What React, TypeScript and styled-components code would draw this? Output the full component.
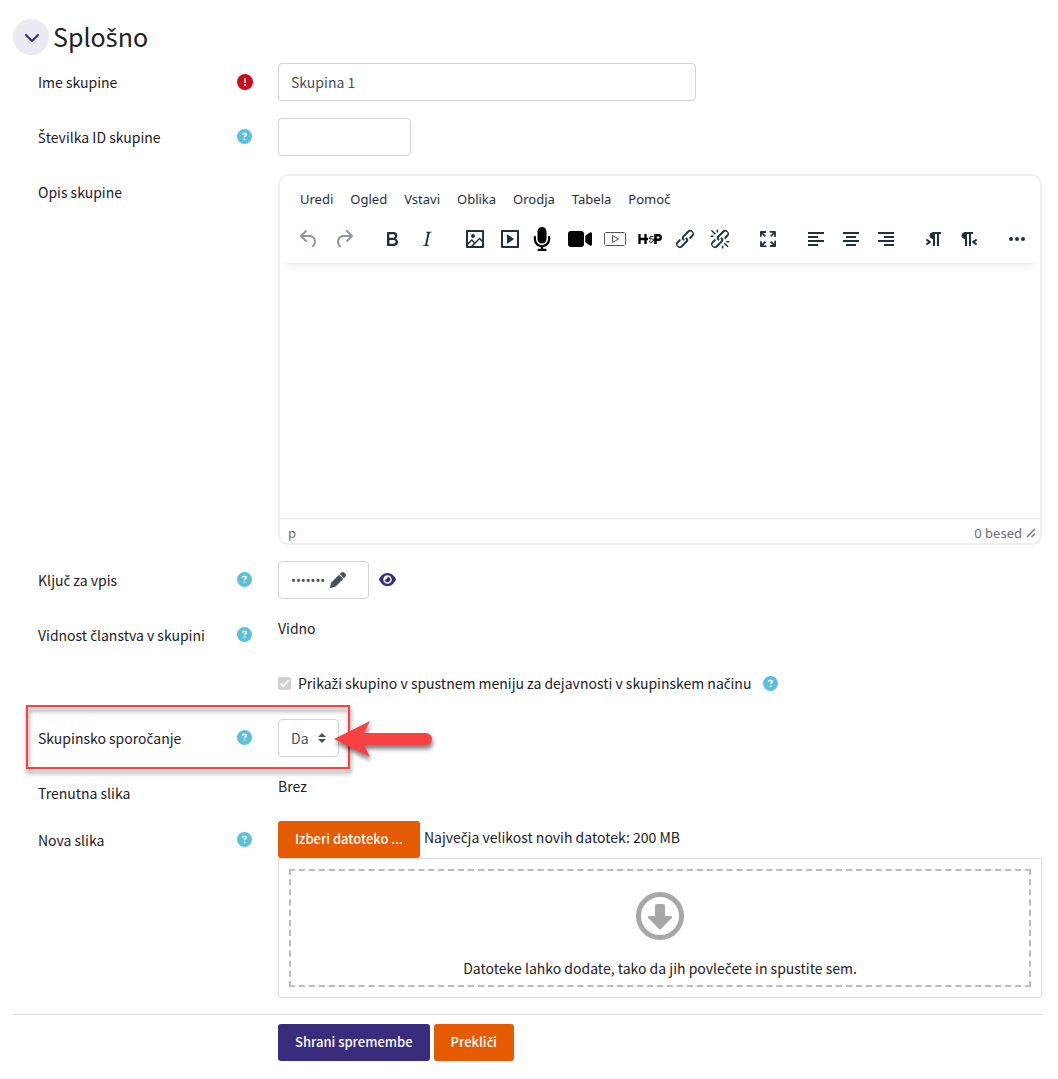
import React from 'react';
import styled, { createGlobalStyle } from 'styled-components';
import {
  FaChevronDown,
  FaCircleExclamation,
  FaCircleQuestion,
  FaEye,
  FaPen,
  FaVideo,
} from 'react-icons/fa6';

const GlobalStyle = createGlobalStyle`
  *, *::before, *::after { box-sizing: border-box; }
  body {
    margin: 0;
    background: #fff;
    color: #1d2125;
    font-family: "Noto Sans CJK SC", "Noto Sans", sans-serif;
    font-size: 14px;
    line-height: 24px;
  }
  button, input, select { font: inherit; color: inherit; margin: 0; }
`;

const Form = styled.form`
  padding: 19px 16px 16px 13px;
`;

const SectionHeader = styled.header`
  display: flex;
  align-items: center;
  gap: 4px;
  height: 36px;
  margin-bottom: 8px;
`;

const Toggle = styled.button`
  display: flex;
  align-items: center;
  justify-content: center;
  width: 36px;
  height: 36px;
  padding: 0 0 0 1px;
  border: 0;
  border-radius: 50%;
  background: #ebe9f2;
  color: #3a2c7d;
`;

const Title = styled.h3`
  margin: 0;
  padding-bottom: 2px;
  font-size: 25px;
  font-weight: 400;
  line-height: 34px;
`;

const CaronLetter = styled.span`
  font-family: "Noto Sans", sans-serif;
`;

const Row = styled.div<{ $height?: number }>`
  position: relative;
  display: grid;
  grid-template-columns: 215px minmax(0, 1fr);
  column-gap: 25px;
  align-items: start;
  min-height: ${p => p.$height ?? 39}px;
  margin: 0 0 16px 25px;
`;

const LabelCell = styled.div`
  display: flex;
  justify-content: space-between;
  align-items: flex-start;
  min-height: 31px;
`;

const LabelText = styled.label`
  padding-top: 7px;
`;

const HelpButton = styled.button<{ $tone?: string; $height?: number }>`
  display: flex;
  align-items: center;
  width: 16px;
  height: ${p => p.$height ?? 37}px;
  padding: 0;
  border: 0;
  background: none;
  color: ${p => p.$tone ?? '#5bc0de'};
`;

const Field = styled.div`
  min-width: 0;
`;

const TextInput = styled.input<{ $width: number }>`
  display: block;
  width: ${p => p.$width}px;
  max-width: 100%;
  height: 38px;
  padding: 6px 12px;
  border: 1px solid #ced4da;
  border-radius: 4px;
  background: #fff;
  color: #495057;
`;

const Editor = styled.div`
  display: flex;
  flex-direction: column;
  height: 371px;
  margin-top: 1px;
  border: 2px solid #eee;
  border-radius: 10px;
  overflow: hidden;
  font-family: "Noto Sans", sans-serif;
  font-size: 13px;
  color: #222f3e;
`;

const EditorHeader = styled.div`
  margin: 0 3px;
  padding-top: 8px;
  background: #fff;
  box-shadow: 0 2px 2px -2px rgba(34, 47, 62, 0.1), 0 8px 8px -4px rgba(34, 47, 62, 0.07);
`;

const MenuBar = styled.div`
  display: flex;
  gap: 1px;
  padding: 0 9px;
`;

const MenuButton = styled.button`
  height: 30px;
  padding: 0 8px;
  border: 0;
  background: none;
`;

const ToolBar = styled.div`
  display: flex;
  gap: 13px;
  padding: 8px 8px 7px;
`;

const ToolGroup = styled.div`
  display: flex;
`;

const ToolButton = styled.button`
  display: flex;
  align-items: center;
  justify-content: center;
  width: 35px;
  height: 34px;
  padding: 0;
  border: 0;
  background: none;
  &:disabled { color: rgba(34, 47, 62, 0.5); }
`;

const EditArea = styled.div`
  flex: 1;
  outline: none;
`;

const StatusBar = styled.div`
  display: flex;
  justify-content: space-between;
  height: 25px;
  padding: 0 4px 0 8px;
  border-top: 1px solid #e3e3e3;
  color: #646d78;
  line-height: 28px;
`;

const WordCount = styled.span`
  display: flex;
  align-items: center;
  gap: 4px;
  height: 28px;
`;

const Inline = styled.div`
  display: flex;
  align-items: center;
`;

const PasswordButton = styled.button`
  display: flex;
  align-items: center;
  gap: 5px;
  width: 91px;
  height: 38px;
  padding: 0 12px;
  border: 1px solid #ced4da;
  border-radius: 4px;
  background: #fff;
  color: #495057;
  font-family: "Noto Sans", sans-serif;
  font-size: 13px;
`;

const RevealButton = styled.button`
  display: flex;
  padding: 0 0 2px;
  margin-left: 10px;
  border: 0;
  background: none;
  color: #3a2c7d;
`;

const CheckBox = styled.input`
  appearance: none;
  display: flex;
  justify-content: center;
  width: 13px;
  height: 13px;
  margin-right: 7px;
  border-radius: 2px;
  background: #d0d0d0;
  &::after {
    content: '';
    width: 5px;
    height: 9px;
    margin-top: 1px;
    border: solid #f6f6f6;
    border-width: 0 2px 2px 0;
    transform: rotate(42deg);
  }
`;

const CheckLabel = styled.label`
  margin-right: 12px;
`;

const SelectBox = styled.div`
  position: relative;
  width: 61px;
  height: 38px;
`;

const Select = styled.select`
  appearance: none;
  width: 100%;
  height: 100%;
  padding: 0 24px 0 12px;
  border: 1px solid #ced4da;
  border-radius: 4px;
  background: #fff;
  color: #495057;
`;

const SelectCaret = styled.svg`
  position: absolute;
  top: 14px;
  right: 13px;
  pointer-events: none;
`;

const Highlight = styled.div`
  position: absolute;
  left: -12px;
  top: -14px;
  width: 324px;
  height: 64px;
  border: 2px solid #f94144;
  filter: drop-shadow(1px 4px 2px rgba(0, 0, 0, 0.5));
  pointer-events: none;
`;

const Pointer = styled.svg`
  position: absolute;
  left: 296px;
  top: 2px;
  filter: drop-shadow(1px 4px 2px rgba(0, 0, 0, 0.5));
  pointer-events: none;
`;

const Button = styled.button<{ $primary?: boolean }>`
  height: 37px;
  padding: 0 17px 2px;
  border: 0;
  border-radius: 3px;
  background: ${p => (p.$primary ? '#3a2c7d' : '#e75b00')};
  color: #fff;
  font-size: 13px;
  font-weight: 500;
  line-height: 35px;
`;

const FileHint = styled.span`
  margin-left: 4px;
  line-height: 32px;
`;

const FileRow = styled.div`
  display: flex;
  align-items: flex-start;
`;

const FileArea = styled.div`
  padding: 10px;
  border: 1px solid #dcdcdc;
  border-radius: 0 0 4px 4px;
`;

const DropZone = styled.div`
  display: flex;
  flex-direction: column;
  align-items: center;
  height: 118px;
  padding-top: 21px;
  border: 2px dashed #bbb;
  color: #a5a7a8;
`;

const DropText = styled.p`
  margin: 16px 0 0;
  color: #1d2125;
`;

const Footer = styled.footer`
  display: flex;
  gap: 4px;
  padding: 9px 0 0 265px;
  border-top: 1px solid #dcdcdc;
`;

/* Letters with a caron take the Latin face; the body face has no glyph for them. */
const Text = ({ children }: { children: string }) => (
  <span>
    {children.split(/([čšžČŠŽ])/).map((part, i) => (i % 2 ? <CaronLetter key={i}>{part}</CaronLetter> : part))}
  </span>
);

const Glyph = ({ d, size = 24 }: { d: string; size?: number }) => (
  <svg width={size} height={size} viewBox="0 0 24 24" fill="currentColor" fillRule="evenodd" aria-hidden="true">
    <path d={d} />
  </svg>
);

const CHAIN =
  'M6.2 12.3a1 1 0 0 1 1.4 1.4l-2 2a2 2 0 1 0 2.6 2.8l4.8-4.8a1 1 0 0 0 0-1.4 1 1 0 1 1 1.4-1.3 2.9 2.9 0 0 1 0 4L9.6 20a3.9 3.9 0 0 1-5.5-5.5l2-2Zm11.6-.6a1 1 0 0 1-1.4-1.4l2-2a2 2 0 1 0-2.6-2.8L11 10.3a1 1 0 0 0 0 1.4A1 1 0 1 1 9.6 13a2.9 2.9 0 0 1 0-4L14.4 4a3.9 3.9 0 0 1 5.5 5.5l-2 2Z';

const icons = {
  undo: 'M6.4 8H12c3.7 0 6.2 2 6.8 5.1.6 2.7-.4 5.6-2.3 6.8a1 1 0 0 1-1-1.8c1.1-.6 1.8-2.7 1.4-4.6-.5-2.1-2.1-3.5-4.9-3.5H6.4l3.3 3.3a1 1 0 1 1-1.4 1.4l-5-5a1 1 0 0 1 0-1.4l5-5a1 1 0 0 1 1.4 1.4L6.4 8Z',
  redo: 'M17.6 10H12c-2.8 0-4.4 1.4-4.9 3.5-.4 2 .3 4 1.4 4.6a1 1 0 1 1-1 1.8c-2-1.2-2.9-4.1-2.3-6.8.6-3 3-5.1 6.8-5.1h5.6l-3.3-3.3a1 1 0 1 1 1.4-1.4l5 5a1 1 0 0 1 0 1.4l-5 5a1 1 0 0 1-1.4-1.4l3.3-3.3Z',
  bold: 'M7.8 19c-.3 0-.5 0-.6-.2l-.2-.5V5.7c0-.2 0-.4.2-.5l.6-.2h5c1.5 0 2.7.3 3.5 1 .7.6 1.1 1.4 1.1 2.5a3 3 0 0 1-.6 1.9c-.4.6-1 1-1.6 1.2.4.1.9.3 1.3.6s.8.7 1 1.2c.4.4.5 1 .5 1.6 0 1.3-.4 2.3-1.3 3-.8.7-2.1 1-3.8 1H7.8Zm5-8.3c.6 0 1.2-.1 1.6-.5.4-.3.6-.7.6-1.3 0-1.1-.8-1.7-2.3-1.7H9.3v3.5h3.4Zm.5 6c.7 0 1.3-.1 1.7-.4.4-.4.6-.9.6-1.5s-.2-1-.7-1.4c-.4-.3-1-.4-2-.4H9.4v3.8h4Z',
  italic: 'm16.7 4.7-.1.9h-.3c-.6 0-1 0-1.4.3-.3.3-.4.6-.5 1.1l-2.1 9.8v.6c0 .5.4.8 1.4.8h.2l-.2.8H8l.2-.8h.2c1.1 0 1.8-.5 2-1.5l2-9.8.1-.5c0-.6-.4-.8-1.4-.8h-.3l.2-.9h5.8Z',
  image: 'm5 15.7 3.3-3.2c.3-.3.7-.3 1 0L12 15l4.1-4c.3-.4.8-.4 1 0l2 1.9V5H5v10.7ZM5 18V19h3l2.8-2.9-2-2L5 17.9Zm14-3-2.5-2.4-6.4 6.5H19v-4ZM4 3h16c.6 0 1 .4 1 1v16c0 .6-.4 1-1 1H4a1 1 0 0 1-1-1V4c0-.6.4-1 1-1Zm6 8a2 2 0 1 0 0-4 2 2 0 0 0 0 4Z',
  media: 'M4 3h16c.6 0 1 .4 1 1v16c0 .6-.4 1-1 1H4a1 1 0 0 1-1-1V4c0-.6.4-1 1-1Zm1 2v14h14V5H5Zm4.8 2.6 5.6 4a.5.5 0 0 1 0 .8l-5.6 4A.5.5 0 0 1 9 16V8a.5.5 0 0 1 .8-.4Z',
  link: CHAIN,
  unlink: CHAIN + 'M7.6 6.3a.8.8 0 0 1-1 1.1L3.3 4.2a.7.7 0 1 1 1-1l3.2 3.1ZM5.1 8.6a.8.8 0 0 1 0 1.5H3a.8.8 0 0 1 0-1.5H5Zm5-3.5a.8.8 0 0 1-1.5 0V3a.8.8 0 0 1 1.5 0V5Zm6 11.8a.8.8 0 0 1 1-1l3.2 3.2a.8.8 0 0 1-1 1L16 17Zm-2.2 2a.8.8 0 0 1 1.5 0V21a.8.8 0 0 1-1.5 0V19Zm5-3.5a.7.7 0 1 1 0-1.5H21a.8.8 0 0 1 0 1.5H19Z',
  fullscreen: 'm15.3 10-1.2-1.3 2.9-3h-2.3a.9.9 0 1 1 0-1.7H19c.5 0 .9.4.9.9v4.4a.9.9 0 1 1-1.8 0V7l-2.9 3Zm0 4 3 3v-2.3a.9.9 0 1 1 1.7 0V19c0 .5-.4.9-.9.9h-4.4a.9.9 0 1 1 0-1.8H17l-3-2.9 1.3-1.2ZM10 15.4l-2.9 3h2.3a.9.9 0 1 1 0 1.7H5a.9.9 0 0 1-.9-.9v-4.4a.9.9 0 1 1 1.8 0V17l2.9-3 1.2 1.3ZM8.7 10 5.7 7v2.3a.9.9 0 0 1-1.7 0V5c0-.5.4-.9.9-.9h4.4a.9.9 0 0 1 0 1.8H7l3 2.9-1.3 1.2Z',
  alignLeft: 'M4 5h16v2H4zM4 9h10v2H4zM4 13h16v2H4zM4 17h10v2H4z',
  alignCenter: 'M4 5h16v2H4zM7 9h10v2H7zM4 13h16v2H4zM7 17h10v2H7z',
  alignRight: 'M4 5h16v2H4zM10 9h10v2H10zM4 13h16v2H4zM10 17h10v2H10z',
  ltr: 'M11 5h8v2h-2v12h-2V7h-2v12h-2v-7c-.5 0-1 0-1.4-.3A3.4 3.4 0 0 1 7.8 10a3.3 3.3 0 0 1 0-2.8 3.4 3.4 0 0 1 1.8-1.8L11 5ZM4.4 16.2 6.2 15l-1.8-1.2a1 1 0 0 1 1.2-1.6l3 2a1 1 0 0 1 0 1.6l-3 2a1 1 0 1 1-1.2-1.6Z',
  rtl: 'M8 5h8v2h-2v12h-2V7h-2v12H8v-7c-.5 0-1 0-1.4-.3A3.4 3.4 0 0 1 4.8 10a3.3 3.3 0 0 1 0-2.8 3.4 3.4 0 0 1 1.8-1.8L8 5ZM19.6 16.2a1 1 0 1 1-1.2 1.6l-3-2a1 1 0 0 1 0-1.6l3-2a1 1 0 1 1 1.2 1.6L17.8 15l1.8 1.2Z',
  more: 'M6 10a2 2 0 1 0 0 4 2 2 0 0 0 0-4Zm12 0a2 2 0 1 0 0 4 2 2 0 0 0 0-4Zm-6 0a2 2 0 1 0 0 4 2 2 0 0 0 0-4Z',
};

const MicrophoneIcon = () => (
  <svg width="24" height="24" viewBox="0 0 512 512" fill="#000" aria-hidden="true">
    <path d="M192 0C139 0 96 43 96 96V256c0 53 43 96 96 96s96-43 96-96V96c0-53-43-96-96-96zM64 216c0-13-11-24-24-24s-24 11-24 24v40c0 89 66 163 152 174V464H120c-13 0-24 11-24 24s11 24 24 24H264c13 0 24-11 24-24s-11-24-24-24H216V430c86-11 152-85 152-174V216c0-13-11-24-24-24s-24 11-24 24v40c0 71-57 128-128 128S64 327 64 256V216z" />
  </svg>
);

const InteractiveVideoIcon = () => (
  <svg width="24" height="24" viewBox="0 0 24 24" fill="none" stroke="#555" aria-hidden="true">
    <rect x="1.5" y="5.5" width="21" height="13" rx="1" strokeDasharray="19 1 12 1" />
    <path d="M9.5 8.5v7l6-3.5Z" />
  </svg>
);

const H5pIcon = () => (
  <svg width="24" height="24" viewBox="0 0 24 24" fill="none" stroke="#000" aria-hidden="true">
    <path d="M1.500 7v10M7.500 7v10M2 12h11" strokeWidth="2.300" />
    <path d="M15.500 9h-3.500l-.6 3c2.600-1 4.200 0 3.900 1.800-.3 1.700-3 2.200-4.600.9" stroke="#fff" strokeWidth="2.400" />
    <path d="M17.500 17V8.200h3c3 0 3 4.600 0 4.600h-5" strokeWidth="2.500" />
    <path d="M15.500 9.500h-3.300l-.6 2.500c2.400-.8 3.900 0 3.600 1.700-.3 1.600-2.800 2-4.200.8" strokeWidth="1" />
  </svg>
);

const DownloadIcon = () => (
  <svg width="48" height="48" viewBox="0 0 48 48" fill="currentColor" aria-hidden="true">
    <circle cx="24" cy="24" r="21.500" fill="none" stroke="currentColor" strokeWidth="5" />
    <path d="M21 12h6a2 2 0 0 1 2 2v10h6c1.200 0 1.500 1.200.7 2L25 37a1.500 1.500 0 0 1-2 0L12.300 26c-.8-.8-.5-2 .7-2h6V14a2 2 0 0 1 2-2Z" />
  </svg>
);

type Tool = { name: string; icon: React.ReactNode; disabled?: boolean };

const toolGroups: Tool[][] = [
  [
    { name: 'Razveljavi', icon: <Glyph d={icons.undo} />, disabled: true },
    { name: 'Ponovi', icon: <Glyph d={icons.redo} />, disabled: true },
  ],
  [
    { name: 'Krepko', icon: <Glyph d={icons.bold} /> },
    { name: 'Ležeče', icon: <Glyph d={icons.italic} /> },
  ],
  [
    { name: 'Slika', icon: <Glyph d={icons.image} /> },
    { name: 'Medij', icon: <Glyph d={icons.media} /> },
    { name: 'Posnemi zvok', icon: <MicrophoneIcon /> },
    { name: 'Posnemi video', icon: <FaVideo size={24} color="#000" /> },
    { name: 'Interaktivni video', icon: <InteractiveVideoIcon /> },
    { name: 'H5P', icon: <H5pIcon /> },
    { name: 'Povezava', icon: <Glyph d={icons.link} /> },
    { name: 'Odstrani povezavo', icon: <Glyph d={icons.unlink} /> },
  ],
  [{ name: 'Celozaslonsko', icon: <Glyph d={icons.fullscreen} /> }],
  [
    { name: 'Leva poravnava', icon: <Glyph d={icons.alignLeft} /> },
    { name: 'Sredinska poravnava', icon: <Glyph d={icons.alignCenter} /> },
    { name: 'Desna poravnava', icon: <Glyph d={icons.alignRight} /> },
  ],
  [
    { name: 'Od leve proti desni', icon: <Glyph d={icons.ltr} /> },
    { name: 'Od desne proti levi', icon: <Glyph d={icons.rtl} /> },
  ],
  [{ name: 'Več', icon: <Glyph d={icons.more} /> }],
];

const menus = ['Uredi', 'Ogled', 'Vstavi', 'Oblika', 'Orodja', 'Tabela', 'Pomoč'];

const Help = ({ height }: { height?: number }) => (
  <HelpButton type="button" aria-label="Pomoč" $height={height}>
    <FaCircleQuestion size={15} />
  </HelpButton>
);

const FormRow = ({
  label, htmlFor, help, required, height, children,
}: {
  label?: string;
  htmlFor?: string;
  help?: boolean;
  required?: boolean;
  height?: number;
  children: React.ReactNode;
}) => (
  <Row $height={height}>
    <LabelCell>
      {label && <LabelText htmlFor={htmlFor}><Text>{label}</Text></LabelText>}
      {required && (
        <HelpButton type="button" aria-label="Obvezno" $tone="#ca0d1b">
          <FaCircleExclamation size={16} />
        </HelpButton>
      )}
      {help && <Help />}
    </LabelCell>
    <Field>{children}</Field>
  </Row>
);

export default function App() {
  return (
    <>
      <GlobalStyle />
      <Form onSubmit={e => e.preventDefault()}>
        <SectionHeader>
          <Toggle type="button" aria-label="Strni Splošno">
            <FaChevronDown size={16} />
          </Toggle>
          <Title><Text>Splošno</Text></Title>
        </SectionHeader>

        <FormRow label="Ime skupine" htmlFor="name" required>
          <TextInput id="name" $width={418} defaultValue="Skupina 1" />
        </FormRow>
        <FormRow label="Številka ID skupine" htmlFor="idnumber" help>
          <TextInput id="idnumber" $width={133} />
        </FormRow>
        <FormRow label="Opis skupine" htmlFor="description">
          <Editor>
            <EditorHeader>
              <MenuBar>
                {menus.map(m => <MenuButton type="button" key={m}>{m}</MenuButton>)}
              </MenuBar>
              <ToolBar>
                {toolGroups.map(group => (
                  <ToolGroup key={group[0].name}>
                    {group.map(t => (
                      <ToolButton type="button" key={t.name} aria-label={t.name} disabled={t.disabled}>
                        {t.icon}
                      </ToolButton>
                    ))}
                  </ToolGroup>
                ))}
              </ToolBar>
            </EditorHeader>
            <EditArea id="description" contentEditable suppressContentEditableWarning role="textbox" aria-label="Opis skupine" />
            <StatusBar>
              <span>p</span>
              <WordCount>
                0 besed
                <svg width="10" height="10" viewBox="0 0 10 10" stroke="currentColor" strokeWidth="1.3" aria-hidden="true">
                  <path d="M1 9 9 1M5.500 9 9 5.500" />
                </svg>
              </WordCount>
            </StatusBar>
          </Editor>
        </FormRow>
        <FormRow label="Ključ za vpis" htmlFor="key" help>
          <Inline>
            <PasswordButton id="key" type="button">
              <span>•••••••</span>
              <FaPen size={16} />
            </PasswordButton>
            <RevealButton type="button" aria-label="Razkrij">
              <FaEye size={17} />
            </RevealButton>
          </Inline>
        </FormRow>
        <FormRow label="Vidnost članstva v skupini" help>Vidno</FormRow>
        <FormRow height={32}>
          <Inline>
            <CheckBox type="checkbox" id="participation" checked disabled readOnly />
            <CheckLabel htmlFor="participation">
              <Text>Prikaži skupino v spustnem meniju za dejavnosti v skupinskem načinu</Text>
            </CheckLabel>
            <Help height={24} />
          </Inline>
        </FormRow>
        <Row>
          <LabelCell>
            <LabelText htmlFor="messaging"><Text>Skupinsko sporočanje</Text></LabelText>
            <Help />
          </LabelCell>
          <SelectBox>
            <Select id="messaging" defaultValue="Da">
              <option>Da</option>
              <option>Ne</option>
            </Select>
            <SelectCaret width="8" height="10" viewBox="0 0 8 10" fill="#495057" aria-hidden="true">
              <path d="M0 4 4 0l4 4ZM0 6l4 4 4-4Z" />
            </SelectCaret>
          </SelectBox>
          <Highlight />
          <Pointer width="98" height="36" viewBox="0 0 98 36" fill="#f94144" aria-hidden="true">
            <path d="M0 18 36 0l-6 12h62a6 6 0 0 1 0 12H30l6 12Z" />
          </Pointer>
        </Row>
        <FormRow label="Trenutna slika" height={31}>Brez</FormRow>
        <FormRow label="Nova slika" htmlFor="file" help>
          <FileRow>
            <Button type="button" id="file">Izberi datoteko ...</Button>
            <FileHint><Text>Največja velikost novih datotek: 200 MB</Text></FileHint>
          </FileRow>
          <FileArea>
            <DropZone>
              <DownloadIcon />
              <DropText><Text>Datoteke lahko dodate, tako da jih povlečete in spustite sem.</Text></DropText>
            </DropZone>
          </FileArea>
        </FormRow>
        <Footer>
          <Button type="submit" $primary>Shrani spremembe</Button>
          <Button type="button"><Text>Prekliči</Text></Button>
        </Footer>
      </Form>
    </>
  );
}
